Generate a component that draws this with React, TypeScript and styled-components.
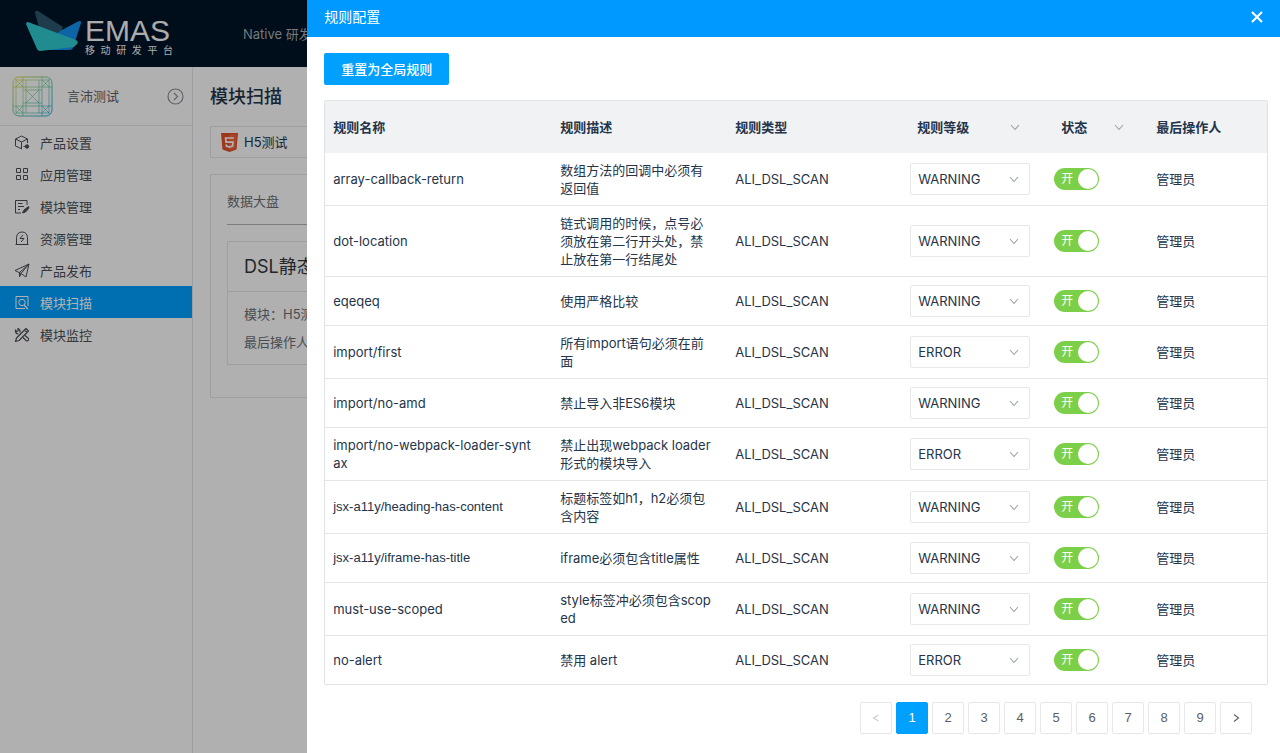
import React, { useState } from "react";
import styled, { createGlobalStyle } from "styled-components";

const GlobalStyle = createGlobalStyle`
  * { box-sizing: border-box; }
  body {
    margin: 0;
    background: #fdfdfd;
    color: #24344a;
    font: 13px/18px Inter, "Noto Sans CJK SC", sans-serif;
  }
  button, select, input { font: inherit; color: inherit; margin: 0; }
  a { color: inherit; text-decoration: none; }
`;

/* ---------- page behind the drawer ---------- */

const Page = styled.div`
  min-height: 100vh;
  display: flex;
  flex-direction: column;
`;

const TopBar = styled.header`
  height: 67px;
  display: flex;
  align-items: center;
  padding-left: 24px;
  background: #001428;
  color: #a8acb0;
`;

const Brand = styled.a`
  display: flex;
  align-self: flex-start;
  width: 219px;
  padding-top: 8px;
  color: #f4f6f8;
`;

const BrandWords = styled.span`
  width: 88px;
  padding-top: 9px;
  display: flex;
  flex-direction: column;
`;

const BrandName = styled.span`
  font: 30px/28px "Liberation Sans", sans-serif;
`;

const BrandCaption = styled.span`
  font-size: 10px;
  line-height: 10px;
  text-align-last: justify;
`;

const Body = styled.div`
  flex: 1;
  display: flex;
`;

const Sidebar = styled.aside`
  width: 193px;
  flex: none;
  border-right: 1px solid #e2e4e6;
`;

const Product = styled.div`
  height: 59px;
  display: flex;
  align-items: center;
  gap: 14px;
  padding: 0 8px 0 12px;
  border-bottom: 1px solid #e2e4e6;
  color: #5c6168;
`;

const ProductName = styled.span`
  flex: 1;
`;

const RoundButton = styled.button`
  display: flex;
  padding: 0;
  border: 0;
  background: none;
  color: #8c9095;
`;

const NavItem = styled.a<{ $active?: boolean }>`
  height: 32px;
  display: flex;
  align-items: center;
  gap: 10px;
  padding: 1px 0 0 14px;
  background: ${(p) => (p.$active ? "#00a0ff" : "transparent")};
  color: ${(p) => (p.$active ? "#ffffff" : "#4a4e54")};
`;

const Main = styled.main`
  flex: 1;
  min-width: 0;
  padding: 17px 17px 0;
`;

const PageTitle = styled.h1`
  margin: 0 0 16px;
  font-size: 18px;
  line-height: 26px;
  font-weight: 500;
`;

const ModuleTab = styled.button`
  width: 100%;
  height: 32px;
  display: flex;
  align-items: center;
  gap: 6px;
  padding: 0 10px;
  border: 1px solid #e2e4e6;
  background: none;
  text-align: left;
`;

const Panel = styled.section`
  height: 224px;
  margin-top: 16px;
  padding: 16px;
  border: 1px solid #e2e4e6;
  color: #6a6e74;
`;

const PanelTitle = styled.h2`
  margin: 0 0 16px;
  padding: 1px 0 14px;
  border-bottom: 1px solid #b0b4b8;
  font-size: 13px;
  line-height: 18px;
  font-weight: 400;
`;

const Card = styled.article`
  border: 1px solid #e2e4e6;
`;

const CardTitle = styled.h3`
  margin: 0;
  padding: 0 16px;
  border-bottom: 1px solid #e2e4e6;
  font-size: 18px;
  line-height: 49px;
  font-weight: 400;
  color: #33373d;
`;

const CardBody = styled.div`
  padding: 8px 16px;
`;

const CardLine = styled.p`
  margin: 0;
  line-height: 28px;
`;

/* ---------- drawer ---------- */

const Mask = styled.div`
  position: fixed;
  inset: 0;
  background: rgba(0, 0, 0, 0.3);
`;

const Drawer = styled.section`
  position: fixed;
  top: 0;
  right: 0;
  bottom: 0;
  width: 76%;
  overflow: auto;
  background: #ffffff;
`;

const DrawerHeader = styled.header`
  height: 37px;
  display: flex;
  align-items: center;
  justify-content: space-between;
  padding: 0 16px 3px 17px;
  background: #0099ff;
  color: #ffffff;
`;

const DrawerTitle = styled.h2`
  margin: 0;
  font-size: 14px;
  line-height: 20px;
  font-weight: 400;
`;

const CloseButton = styled.button`
  display: flex;
  padding: 0;
  border: 0;
  background: none;
`;

const DrawerBody = styled.div`
  padding: 16px 12px 16px 17px;
`;

const PrimaryButton = styled.button`
  height: 32px;
  padding: 0 17px;
  border: 0;
  border-radius: 2px;
  background: #00a0ff;
  color: #ffffff;
  font-weight: 500;
`;

const RuleTable = styled.table`
  width: 100%;
  margin-top: 15px;
  table-layout: fixed;
  border-spacing: 0;
  border: 1px solid #dfe2e6;
  border-radius: 2px;
`;

const HeadCell = styled.th`
  height: 52px;
  padding: 0 8px;
  background: #f1f2f4;
  text-align: left;
  font-weight: 600;
`;

const Cell = styled.td`
  padding: 8px 16px 8px 8px;
  border-bottom: 1px solid #e3e5e8;
  word-break: break-all;

  tr:last-child > & { border-bottom: 0; }
`;

const NameCell = styled(Cell)<{ $plain?: boolean }>`
  padding-right: 20px;
  ${(p) => p.$plain && 'font-family: "Liberation Sans", sans-serif;'}
`;

const ControlCell = styled(Cell)`
  padding-right: 8px;
`;

const FilterButton = styled.button<{ $width: number }>`
  width: ${(p) => p.$width}px;
  height: 32px;
  display: flex;
  align-items: center;
  justify-content: space-between;
  padding: 0 10px 0 7px;
  border: 0;
  background: none;
  font-weight: 600;
`;

const SelectBox = styled.label`
  width: 120px;
  height: 32px;
  display: grid;
  align-items: center;
  border: 1px solid #e6e8eb;
  border-radius: 2px;
  background: #ffffff;

  & > * { grid-area: 1 / 1; }
  & > svg { justify-self: end; margin-right: 10px; pointer-events: none; }
`;

const Select = styled.select`
  width: 100%;
  height: 30px;
  padding: 0 24px 0 7px;
  border: 0;
  appearance: none;
  background: none;
`;

const Switch = styled.label<{ $on: boolean }>`
  width: 45px;
  height: 22px;
  display: flex;
  align-items: center;
  justify-content: space-between;
  flex-direction: ${(p) => (p.$on ? "row" : "row-reverse")};
  padding: ${(p) => (p.$on ? "0 1px 0 7px" : "0 7px 0 1px")};
  border-radius: 11px;
  background: ${(p) => (p.$on ? "#7ccf48" : "#c4c8cc")};
  color: #ffffff;
  font-size: 12px;
`;

const SwitchInput = styled.input`
  width: 20px;
  height: 20px;
  appearance: none;
  border-radius: 50%;
  background: #ffffff;
`;

const Pager = styled.nav`
  display: flex;
  justify-content: flex-end;
  gap: 4px;
  padding: 17px 16px 0 0;
`;

const PageButton = styled.button<{ $active?: boolean }>`
  width: 32px;
  height: 32px;
  display: flex;
  align-items: center;
  justify-content: center;
  padding: 0;
  border: 1px solid ${(p) => (p.$active ? "#00a0ff" : "#e6e8eb")};
  border-radius: 2px;
  background: ${(p) => (p.$active ? "#00a0ff" : "#ffffff")};
  color: ${(p) => (p.$active ? "#ffffff" : "#5a5e64")};
  font-family: "Liberation Sans", sans-serif;

  &:disabled { color: #c8ccd0; }
`;

/* ---------- drawings ---------- */

const Logo = () => (
  <svg width="61" height="44" viewBox="24 8 61 44" aria-hidden="true">
    <path d="M35 13Q35 10 38 11L63 27L60 35L40 31Z" fill="#2b566d" />
    <path d="M60 31L79 21Q82 21 81 23L73 48Q72 50 70 50L40 50Z" fill="#1591ee" />
    <path d="M28 22L76 40Q79 42 77 44L74 47L40 51Q38 51 37 49L26 24Q26 22 28 22Z" fill="#2ec9cf" />
  </svg>
);

const Emblem = () => (
  <svg width="41" height="41" viewBox="0 0 41 41" fill="none" stroke="url(#emblem)" aria-hidden="true">
    <defs>
      <linearGradient id="emblem" x1="0" y1="0" x2="1" y2="1">
        <stop offset="0" stopColor="#e0dc3c" />
        <stop offset="0.5" stopColor="#6cc9a0" />
        <stop offset="1" stopColor="#2aa8d8" />
      </linearGradient>
    </defs>
    <rect x="1" y="1" width="39" height="39" rx="6" />
    <path
      strokeWidth="0.7"
      d="M4 3V38M11 1V40M14 4V37M27 4V37M30 1V40M37 3V38M1 11H40M1 30H40M4 4H37M4 37H37M11 14H30M11 27H30M14 14L27 27M27 14L14 27M4 4L11 11M37 4L30 11M4 37L11 30M37 37L30 30M11 4L4 11M30 4L37 11M11 37L4 30M30 37L37 30"
    />
  </svg>
);

const Html5 = () => (
  <svg width="17" height="19" viewBox="0 0 17 19" aria-hidden="true">
    <path d="M0 0H17L15.500 16.500L8.500 19L1.500 16.500Z" fill="#e4502a" />
    <path d="M8.500 1.500H15.400L14.100 15.400L8.500 17.400Z" fill="#f0663a" />
    <path d="M12.800 5H4.600L5 9.200H12L11.600 13L8.500 14.100L5.400 13L5.200 11.400" fill="none" stroke="#fff" strokeWidth="1.700" />
  </svg>
);

const Chevron = ({ dir = "down", color = "#9aa0a8" }: { dir?: "down" | "left" | "right"; color?: string }) => {
  const d = { down: "M1 3L5 7.500L9 3", left: "M7.500 2L2.500 5L7.500 8", right: "M3 1.500L7.500 5L3 8.500" }[dir];
  return (
    <svg width="10" height="10" viewBox="0 0 10 10" fill="none" stroke={color} strokeWidth="1.100" aria-hidden="true">
      <path d={d} />
    </svg>
  );
};

const navShapes: Record<string, React.ReactNode> = {
  cube: (
    <>
      <path d="M8 14L1.500 11V4L7.500 1L13.500 4V8M1.500 4L7.500 7L13.500 4M7.500 7V14" />
      <circle cx="13" cy="11.500" r="1.700" fill="currentColor" />
      <path d="M9.500 11.500H11" />
    </>
  ),
  grid: <path d="M2.500 1.500H6.500V5.500H2.500ZM9.500 1.500H13.500V5.500H9.500ZM2.500 8.500H6.500V12.500H2.500ZM9.500 8.500H13.500V12.500H9.500Z" />,
  note: (
    <>
      <path d="M13 6V1.500H1.500V14H7M4 4.500H8.500M4 7.500H10M4 10.500H6" />
      <path d="M14.500 7.500L10 11L8.500 14L11.500 13L15 9Z" fill="currentColor" />
    </>
  ),
  bolt: (
    <>
      <path d="M2.500 13.500V6.500Q3 1 8 1Q13 1 13.500 6.500V13.500M1.500 13.500H14.500" />
      <path d="M9 4L6 7.500H10L7 11" />
    </>
  ),
  plane: <path d="M1 7.500L15 1L12 14L7 10.500ZM15 1L5.500 9.500V14L7 10.500L15 1" />,
  scan: (
    <>
      <path d="M14 11V1.500H2V13.500H11" />
      <circle cx="8" cy="7.500" r="3.200" />
      <path d="M10 10L14 14" strokeWidth="1.300" />
    </>
  ),
  tools: (
    <>
      <path d="M12 1.500L14.500 4L5 13.500L1.500 14.500L2.500 11Z M10.500 3L13 5.500" strokeWidth="1.200" />
      <path d="M6 5.500Q6.500 2.500 4 1.500V4L2.500 4.500L1.500 3Q1 6.500 4.500 7M9 10.500L12 13.500Q13.500 14.500 14.500 13Q15 12 14 11L11 8.500" strokeWidth="1.200" />
    </>
  ),
};

const NavIcon = ({ name }: { name: string }) => (
  <svg width="16" height="16" viewBox="0 0 16 16" fill="none" stroke="currentColor" strokeLinejoin="round" aria-hidden="true">
    {navShapes[name]}
  </svg>
);

/* ---------- data ---------- */

const navItems = [
  { icon: "cube", label: "产品设置" },
  { icon: "grid", label: "应用管理" },
  { icon: "note", label: "模块管理" },
  { icon: "bolt", label: "资源管理" },
  { icon: "plane", label: "产品发布" },
  { icon: "scan", label: "模块扫描", active: true },
  { icon: "tools", label: "模块监控" },
];

type Rule = { name: string; desc: string; level: "WARNING" | "ERROR"; plain?: boolean };

const rules: Rule[] = [
  { name: "array-callback-return", desc: "数组方法的回调中必须有返回值", level: "WARNING" },
  { name: "dot-location", desc: "链式调用的时候，点号必须放在第二行开头处，禁止放在第一行结尾处", level: "WARNING" },
  { name: "eqeqeq", desc: "使用严格比较", level: "WARNING" },
  { name: "import/first", desc: "所有import语句必须在前面", level: "ERROR" },
  { name: "import/no-amd", desc: "禁止导入非ES6模块", level: "WARNING" },
  { name: "import/no-webpack-loader-syntax", desc: "禁止出现webpack loader形式的模块导入", level: "ERROR" },
  { name: "jsx-a11y/heading-has-content", desc: "标题标签如h1，h2必须包含内容", level: "WARNING", plain: true },
  { name: "jsx-a11y/iframe-has-title", desc: "iframe必须包含title属性", level: "WARNING", plain: true },
  { name: "must-use-scoped", desc: "style标签冲必须包含scoped", level: "WARNING" },
  { name: "no-alert", desc: "禁用 alert", level: "ERROR" },
];

const columnWidths = [227, 175, 175, 144, 102, 119];

const RuleRow = ({ rule }: { rule: Rule }) => {
  const [on, setOn] = useState(true);
  return (
    <tr>
      <NameCell $plain={rule.plain}>{rule.name}</NameCell>
      <Cell>{rule.desc}</Cell>
      <Cell>ALI_DSL_SCAN</Cell>
      <ControlCell>
        <SelectBox>
          <Select defaultValue={rule.level} aria-label={`${rule.name} 规则等级`}>
            <option>WARNING</option>
            <option>ERROR</option>
          </Select>
          <Chevron />
        </SelectBox>
      </ControlCell>
      <ControlCell>
        <Switch $on={on}>
          {on ? "开" : "关"}
          <SwitchInput type="checkbox" role="switch" checked={on} onChange={() => setOn(!on)} />
        </Switch>
      </ControlCell>
      <Cell>管理员</Cell>
    </tr>
  );
};

export default function App() {
  const [page, setPage] = useState(1);
  return (
    <>
      <GlobalStyle />
      <Page>
        <TopBar>
          <Brand href="#">
            <Logo />
            <BrandWords>
              <BrandName>EMAS</BrandName>
              <BrandCaption>移动研发平台</BrandCaption>
            </BrandWords>
          </Brand>
          <a href="#">Native 研发</a>
        </TopBar>
        <Body>
          <Sidebar>
            <Product>
              <Emblem />
              <ProductName>言沛测试</ProductName>
              <RoundButton aria-label="切换产品">
                <svg width="17" height="17" viewBox="0 0 17 17" fill="none" stroke="currentColor" strokeWidth="1.200">
                  <circle cx="8.500" cy="8.500" r="7.500" />
                  <path d="M7 5L10.500 8.500L7 12" />
                </svg>
              </RoundButton>
            </Product>
            <nav>
              {navItems.map((item) => (
                <NavItem key={item.label} href="#" $active={item.active}>
                  <NavIcon name={item.icon} />
                  {item.label}
                </NavItem>
              ))}
            </nav>
          </Sidebar>
          <Main>
            <PageTitle>模块扫描</PageTitle>
            <ModuleTab>
              <Html5 />
              H5测试
            </ModuleTab>
            <Panel>
              <PanelTitle>数据大盘</PanelTitle>
              <Card>
                <CardTitle>DSL静态</CardTitle>
                <CardBody>
                  <CardLine>模块：H5测试</CardLine>
                  <CardLine>最后操作人</CardLine>
                </CardBody>
              </Card>
            </Panel>
          </Main>
        </Body>
      </Page>
      <Mask />
      <Drawer role="dialog" aria-labelledby="drawer-title">
        <DrawerHeader>
          <DrawerTitle id="drawer-title">规则配置</DrawerTitle>
          <CloseButton aria-label="关闭">
            <svg width="14" height="14" viewBox="0 0 14 14" fill="none" stroke="currentColor" strokeWidth="2">
              <path d="M2 2L12 12M12 2L2 12" />
            </svg>
          </CloseButton>
        </DrawerHeader>
        <DrawerBody>
          <PrimaryButton>重置为全局规则</PrimaryButton>
          <RuleTable>
            <colgroup>
              {columnWidths.map((width, i) => (
                <col key={i} width={width} />
              ))}
            </colgroup>
            <thead>
              <tr>
                <HeadCell>规则名称</HeadCell>
                <HeadCell>规则描述</HeadCell>
                <HeadCell>规则类型</HeadCell>
                <HeadCell>
                  <FilterButton $width={120}>
                    规则等级
                    <Chevron />
                  </FilterButton>
                </HeadCell>
                <HeadCell>
                  <FilterButton $width={80}>
                    状态
                    <Chevron />
                  </FilterButton>
                </HeadCell>
                <HeadCell>最后操作人</HeadCell>
              </tr>
            </thead>
            <tbody>
              {rules.map((rule) => (
                <RuleRow key={rule.name} rule={rule} />
              ))}
            </tbody>
          </RuleTable>
          <Pager aria-label="分页">
            <PageButton disabled={page === 1} aria-label="上一页" onClick={() => setPage(page - 1)}>
              <Chevron dir="left" color="currentColor" />
            </PageButton>
            {[1, 2, 3, 4, 5, 6, 7, 8, 9].map((n) => (
              <PageButton key={n} $active={n === page} onClick={() => setPage(n)}>
                {n}
              </PageButton>
            ))}
            <PageButton disabled={page === 9} aria-label="下一页" onClick={() => setPage(page + 1)}>
              <Chevron dir="right" color="currentColor" />
            </PageButton>
          </Pager>
        </DrawerBody>
      </Drawer>
    </>
  );
}
